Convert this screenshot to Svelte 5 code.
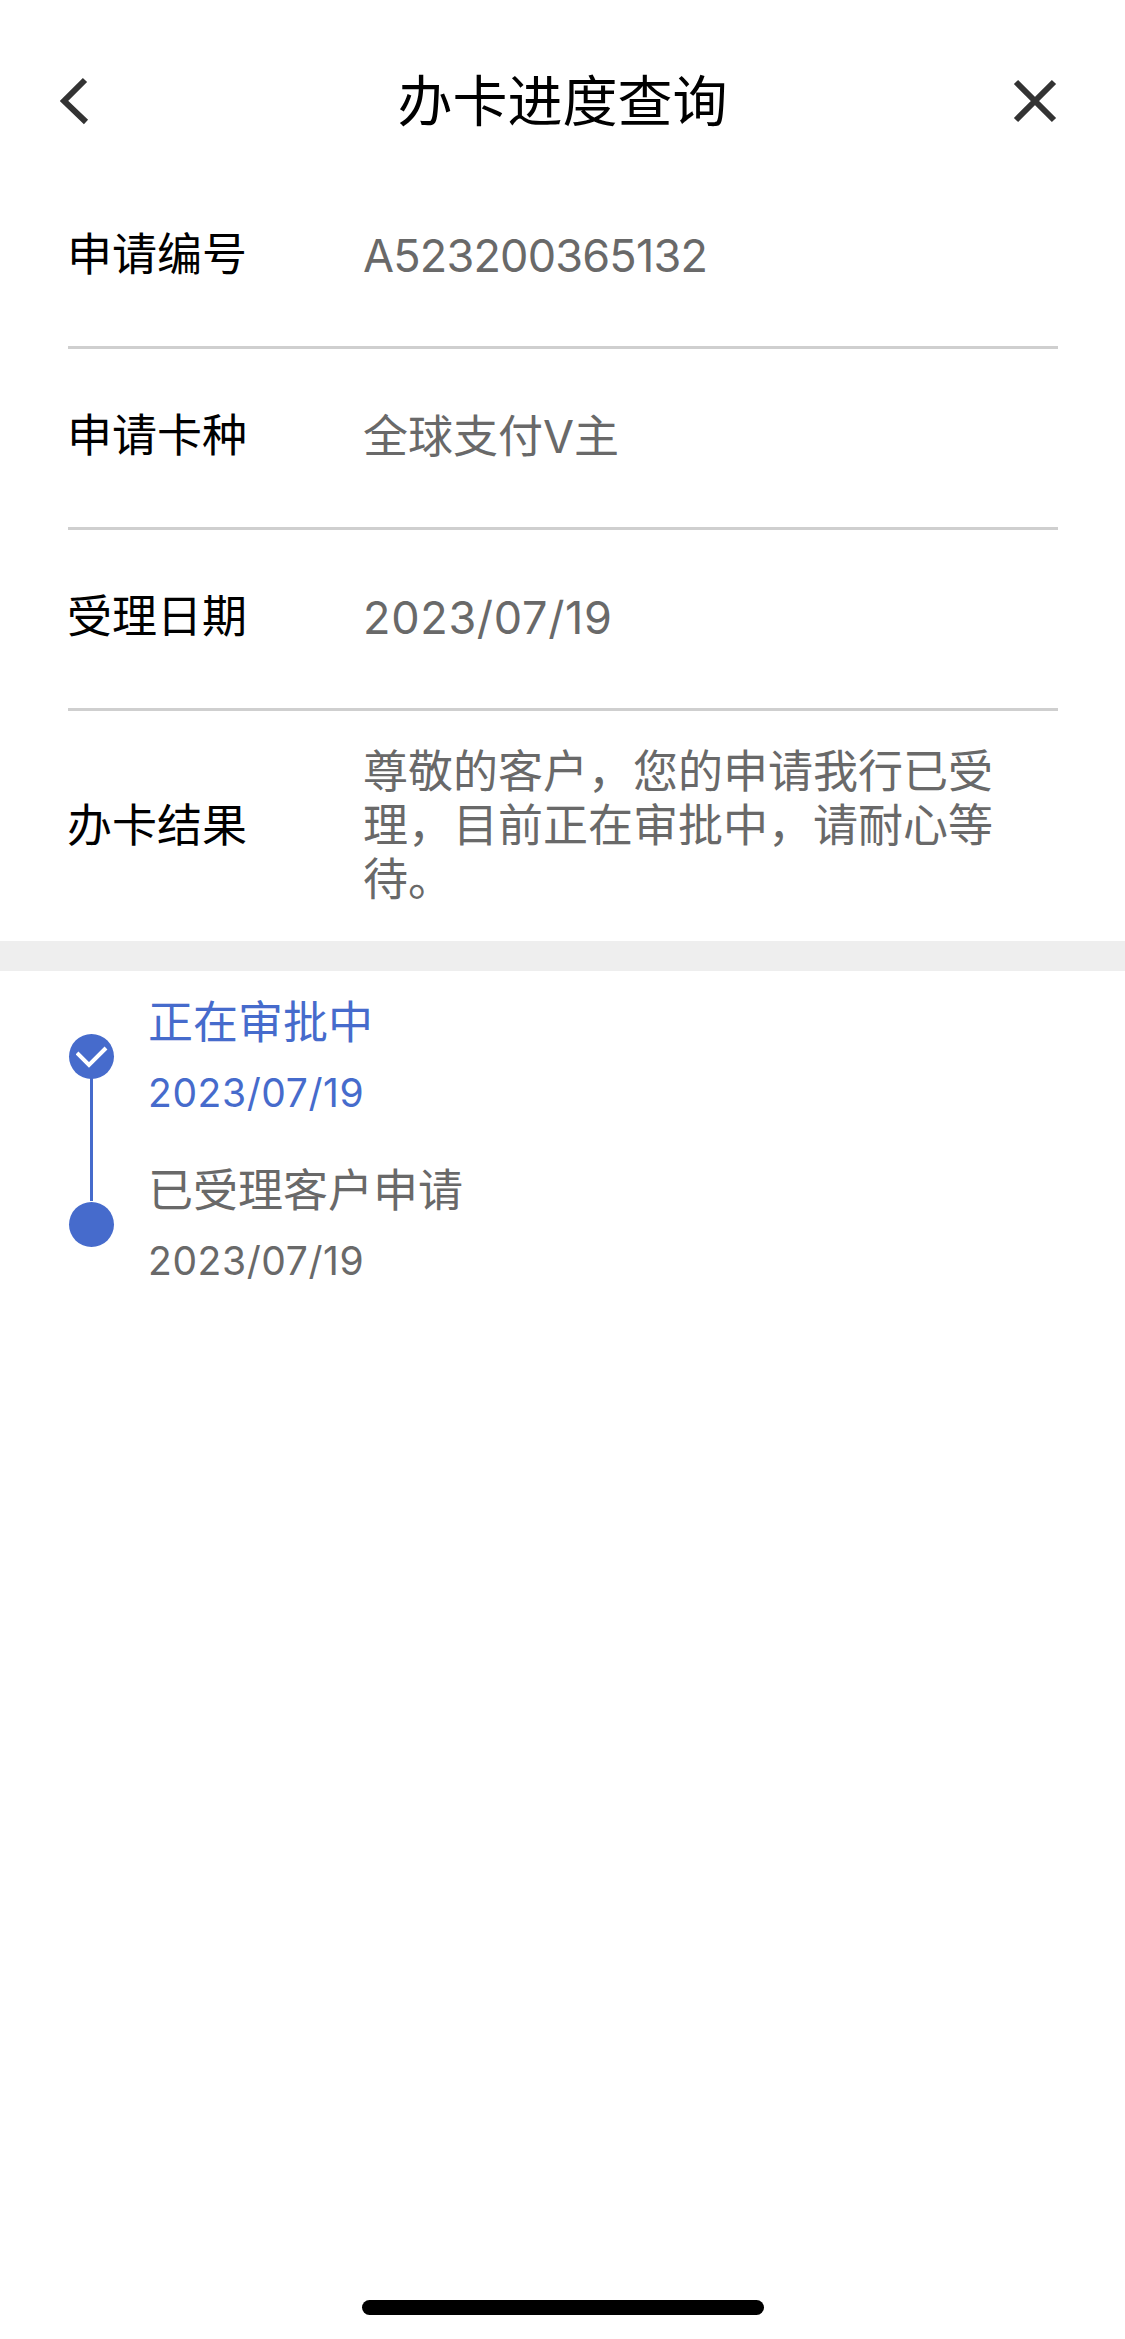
<script>
  const rows = [
    { label: '申请编号', value: 'A523200365132', kind: 'code' },
    { label: '申请卡种', value: '全球支付V主', kind: '' },
    { label: '受理日期', value: '2023/07/19', kind: 'day' }
  ];
</script>

<div class="page">
  <header class="nav">
    <svg class="back" width="30" height="48" viewBox="0 0 30 48" aria-hidden="true">
      <path d="M25 3 L4 24 L26 45" fill="none" stroke="#333" stroke-width="6" />
    </svg>
    <h1>办卡进度查询</h1>
    <svg class="close" width="46" height="46" viewBox="0 0 46 46" aria-hidden="true">
      <path d="M4 4 L42 42 M42 4 L4 42" fill="none" stroke="#333" stroke-width="6" />
    </svg>
  </header>

  <section class="info">
    {#each rows as r}
      <div class="row">
        <span class="label">{r.label}</span>
        <span class="value single {r.kind}">{r.value}</span>
      </div>
    {/each}
    <div class="row last">
      <span class="label">办卡结果</span>
      <span class="value">尊敬的客户，您的申请我行已受理，目前正在审批中，请耐心等待。</span>
    </div>
  </section>

  <div class="band"></div>

  <section class="steps">
    <div class="step active">
      <div class="rail">
        <span class="dot">
          <svg width="32" height="24" viewBox="0 0 32 24" aria-hidden="true">
            <path d="M1 8 L13 20 L30 3" fill="none" stroke="#fff" stroke-width="4" />
          </svg>
        </span>
      </div>
      <div class="text">
        <div class="title">正在审批中</div>
        <div class="date">2023/07/19</div>
      </div>
    </div>
    <div class="step">
      <div class="rail"><span class="dot"></span></div>
      <div class="text">
        <div class="title">已受理客户申请</div>
        <div class="date">2023/07/19</div>
      </div>
    </div>
  </section>

  <div class="home"></div>
</div>

<style>
  :global(body) { margin: 0; background: #fff; }
  .page {
    width: 1125px;
    height: 2339px;
    position: relative;
    background: #fff;
    font-family: Inter, "Noto Sans CJK SC", sans-serif;
    overflow: hidden;
  }
  .nav {
    height: 168px;
    padding: 34px 67px 0;
    box-sizing: border-box;
    display: grid;
    grid-template-columns: 1fr auto 1fr;
    align-items: center;
  }
  .back { margin-left: -7px; justify-self: start; }
  .close { justify-self: end; }
  .nav h1 {
    margin: 0 0 8px;
    font-size: 55px;
    font-weight: 400;
    color: #000;
  }
  .info { padding: 0 67px 0 68px; }
  .row {
    display: flex;
    align-items: center;
    height: 181px;
    box-sizing: border-box;
    padding-bottom: 4px;
    border-bottom: 3px solid #cfcfcf;
  }
  .row.last {
    height: 230px;
    border-bottom: 0;
    padding-bottom: 0;
  }
  .label {
    width: 296px;
    margin-left: -1px;
    flex: none;
    font-size: 45px;
    line-height: 54px;
    color: #000;
  }
  .value {
    font-size: 45px;
    line-height: 54px;
    color: #696969;
    width: 650px;
  }
  .single { padding-top: 2px; }
  .code { letter-spacing: -0.8px; }
  .day { letter-spacing: 0.7px; }
  .band { height: 30px; background: #eee; }
  .steps { padding: 0 0 0 68px; }
  .step {
    display: flex;
    height: 168px;
  }
  .rail {
    width: 46px;
    margin-right: 34px;
    position: relative;
    flex: none;
  }
  .dot {
    position: absolute;
    left: 1px;
    top: 63px;
    width: 45px;
    height: 45px;
    border-radius: 50%;
    background: #466bcc;
    display: flex;
    align-items: center;
    justify-content: center;
  }
  .active .rail::after {
    content: "";
    position: absolute;
    left: 22px;
    top: 100px;
    width: 3px;
    height: 130px;
    background: #466bcc;
  }
  .text { padding-top: 22px; }
  .title { font-size: 45px; line-height: 60px; color: #696969; }
  .date { font-size: 39px; line-height: 50px; margin-top: 15px; letter-spacing: 0.6px; color: #696969; }
  .active .title, .active .date { color: #466bcc; }
  .home {
    position: absolute;
    left: 362px;
    bottom: 24px;
    width: 402px;
    height: 15px;
    border-radius: 8px;
    background: #000;
  }
</style>
